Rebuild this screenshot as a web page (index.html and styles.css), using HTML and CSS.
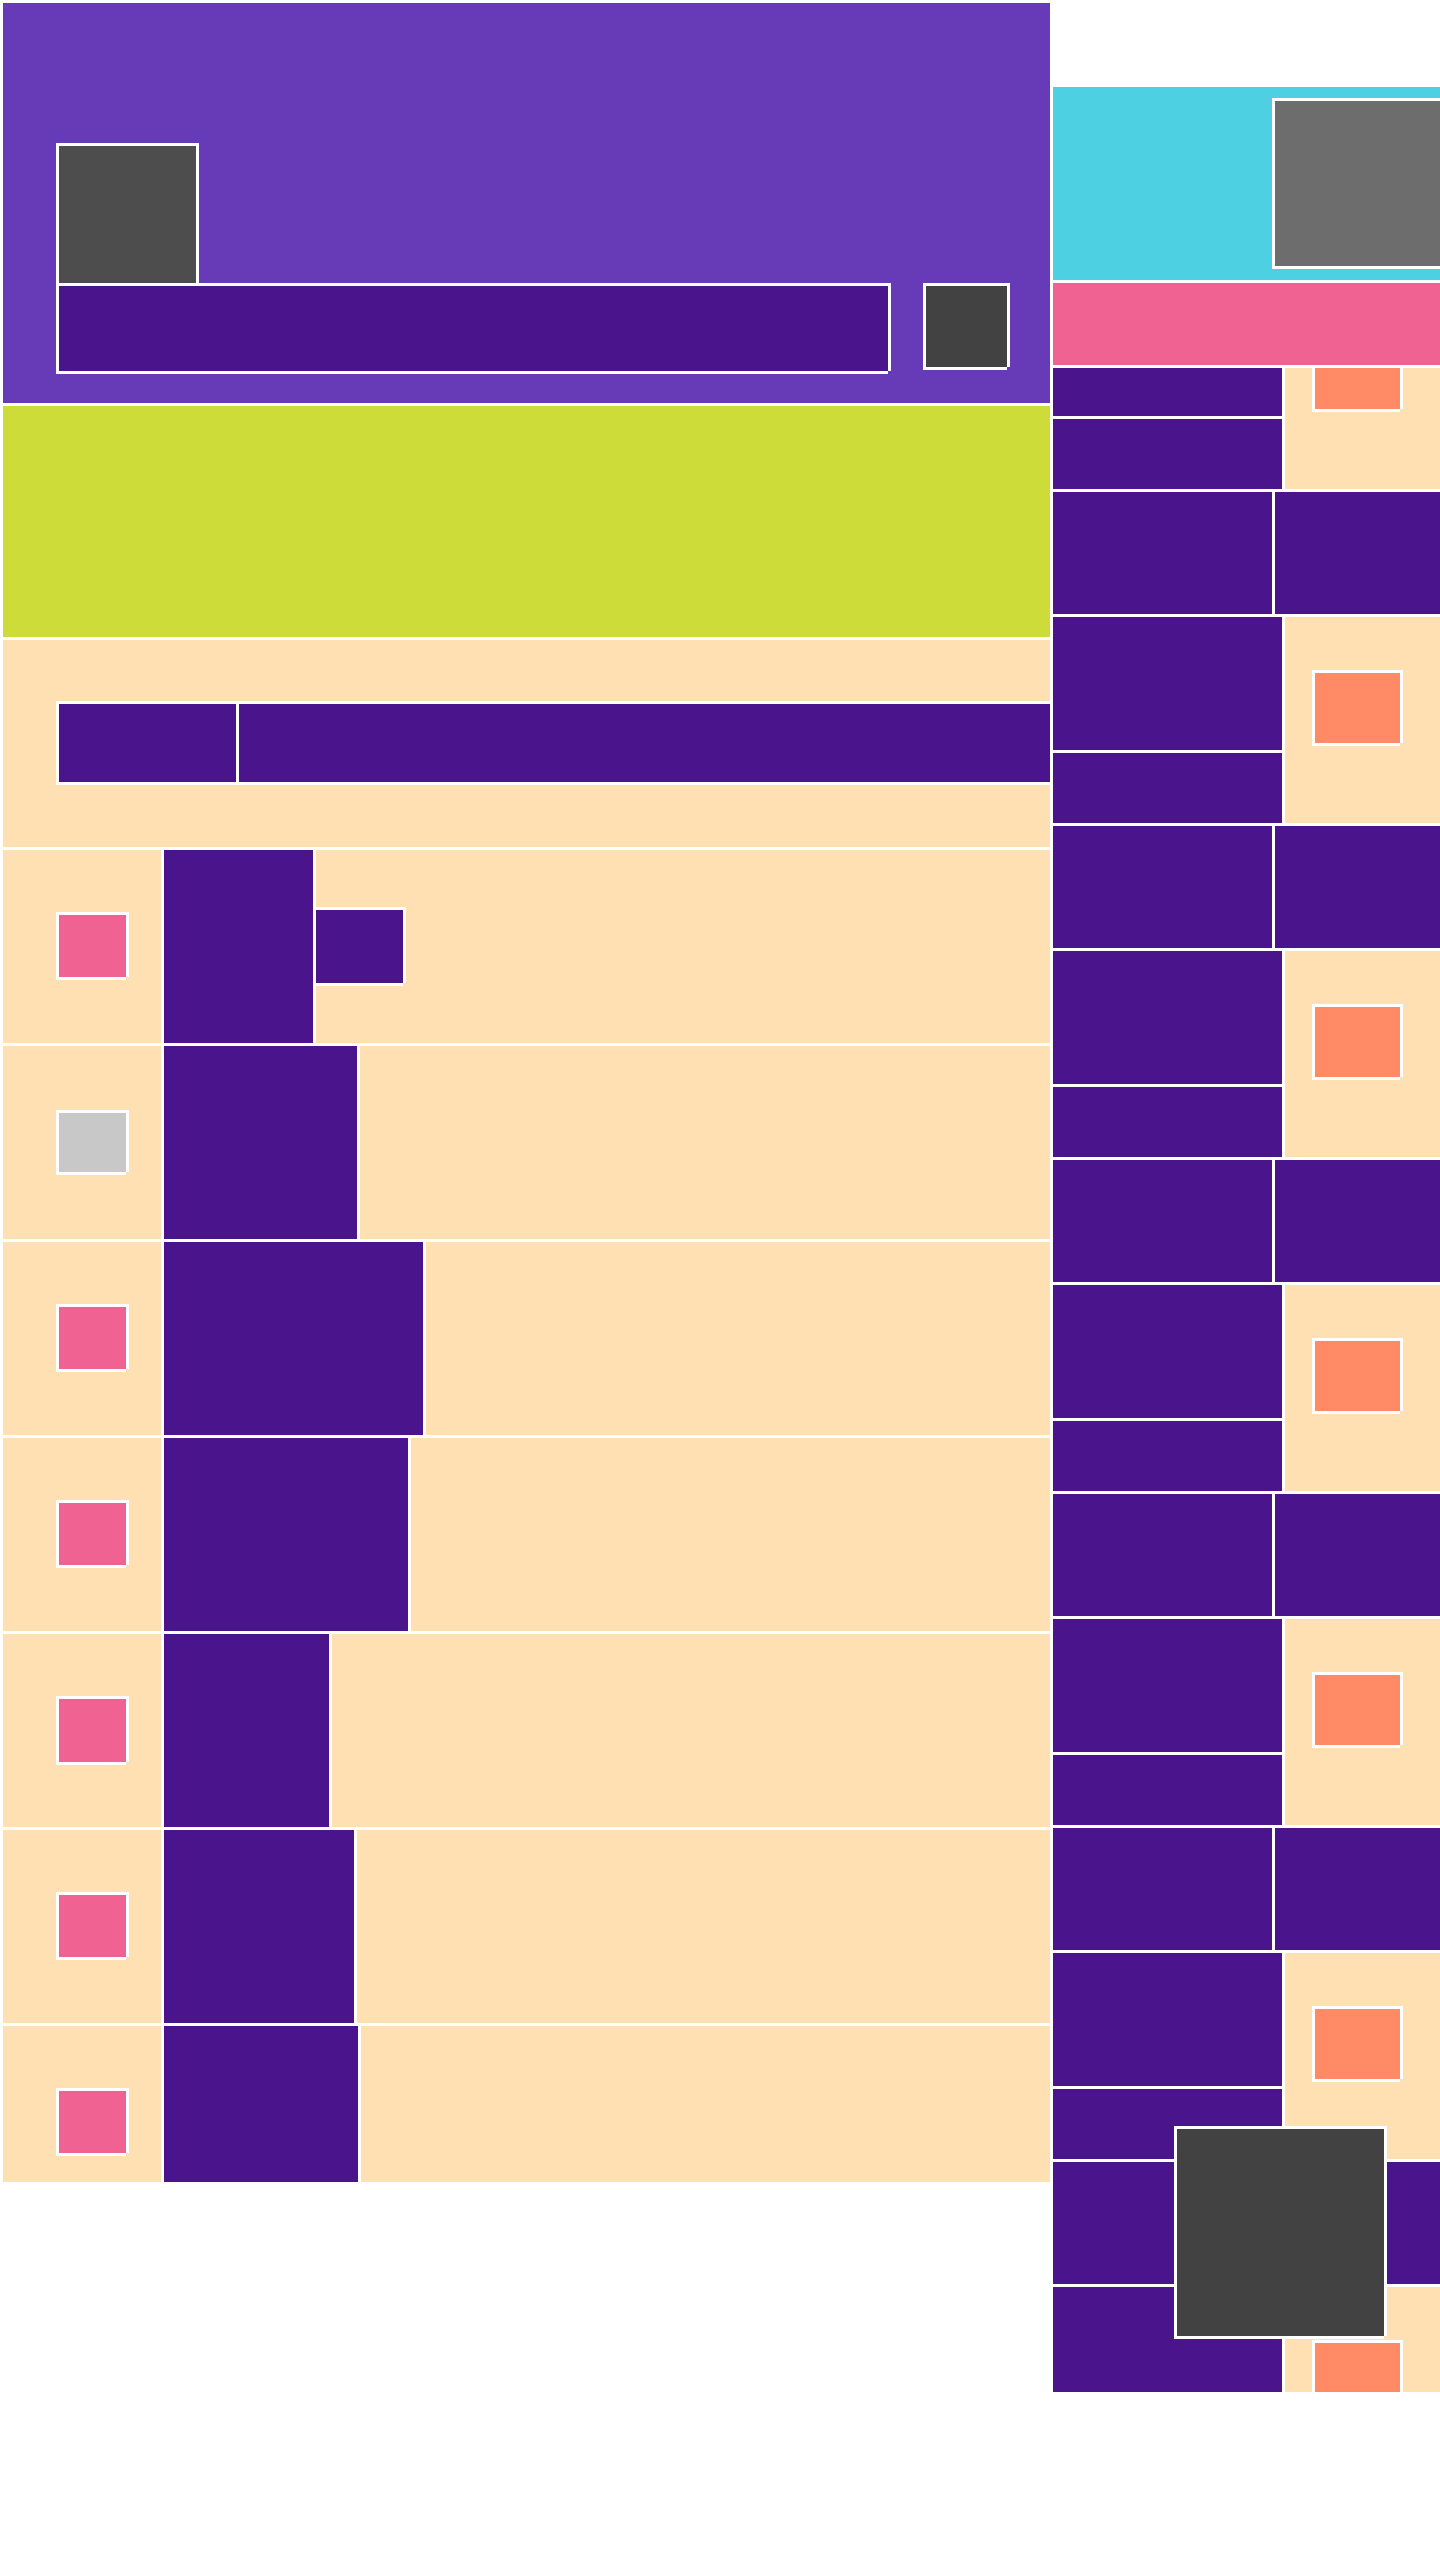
FILE: index.html
```html
<!DOCTYPE html>
<html>
<head>
  <meta charset="utf-8">
  <meta name="viewport" content="width=device-width, initial-scale=1">
  <title>Wireframe</title>
  <link rel="stylesheet" href="styles.css">
</head>
<body>
  <div class="page">
    <main class="main">
      <header class="hero">
        <div class="avatar edge"></div>
        <div class="hero-row">
          <div class="hero-bar edge"></div>
          <div class="hero-btn edge"></div>
        </div>
      </header>

      <div class="banner"></div>

      <div class="tabs">
        <div class="tab tab-first edge"></div>
        <div class="tab tab-rest edge"></div>
      </div>

      <div class="row">
        <div class="row-icon"><div class="chip edge"></div></div>
        <div class="row-label" style="width: 149px"></div>
        <div class="row-fill"><div class="tag edge"></div></div>
      </div>
      <div class="row">
        <div class="row-icon"><div class="chip chip-off edge"></div></div>
        <div class="row-label" style="width: 193px"></div>
        <div class="row-fill"></div>
      </div>
      <div class="row">
        <div class="row-icon"><div class="chip edge"></div></div>
        <div class="row-label" style="width: 259px"></div>
        <div class="row-fill"></div>
      </div>
      <div class="row">
        <div class="row-icon"><div class="chip edge"></div></div>
        <div class="row-label" style="width: 244px"></div>
        <div class="row-fill"></div>
      </div>
      <div class="row">
        <div class="row-icon"><div class="chip chip-tall edge"></div></div>
        <div class="row-label" style="width: 165px"></div>
        <div class="row-fill"></div>
      </div>
      <div class="row">
        <div class="row-icon"><div class="chip edge"></div></div>
        <div class="row-label" style="width: 190px"></div>
        <div class="row-fill"></div>
      </div>
      <div class="row row-last">
        <div class="row-icon"><div class="chip edge"></div></div>
        <div class="row-label" style="width: 194px"></div>
        <div class="row-fill"></div>
      </div>
    </main>

    <aside class="side">
      <div class="side-top">
        <div class="side-photo edge"></div>
      </div>
      <div class="side-head"></div>

      <div class="feed">
        <div class="card">
          <div class="card-text"><div class="card-title"></div><div class="card-sub"></div></div>
          <div class="card-media"><div class="thumb edge"></div></div>
        </div>
        <div class="pair"><div class="pair-a"></div><div class="pair-b"></div></div>

        <div class="card">
          <div class="card-text"><div class="card-title"></div><div class="card-sub"></div></div>
          <div class="card-media"><div class="thumb edge"></div></div>
        </div>
        <div class="pair"><div class="pair-a"></div><div class="pair-b"></div></div>

        <div class="card">
          <div class="card-text"><div class="card-title"></div><div class="card-sub"></div></div>
          <div class="card-media"><div class="thumb edge"></div></div>
        </div>
        <div class="pair"><div class="pair-a"></div><div class="pair-b"></div></div>

        <div class="card">
          <div class="card-text"><div class="card-title"></div><div class="card-sub"></div></div>
          <div class="card-media"><div class="thumb edge"></div></div>
        </div>
        <div class="pair"><div class="pair-a"></div><div class="pair-b"></div></div>

        <div class="card">
          <div class="card-text"><div class="card-title"></div><div class="card-sub"></div></div>
          <div class="card-media"><div class="thumb edge"></div></div>
        </div>
        <div class="pair"><div class="pair-a"></div><div class="pair-b"></div></div>

        <div class="card">
          <div class="card-text"><div class="card-title"></div><div class="card-sub"></div></div>
          <div class="card-media"><div class="thumb edge"></div></div>
        </div>
        <div class="pair"><div class="pair-a"></div><div class="pair-b"></div></div>

        <div class="card">
          <div class="card-text"><div class="card-title"></div><div class="card-sub"></div></div>
          <div class="card-media"><div class="thumb edge"></div></div>
        </div>
      </div>
    </aside>

    <div class="fab edge"></div>
  </div>
</body>
</html>
```

FILE: styles.css
```css
html, body {
  margin: 0;
  background: #fff;
}

.page {
  position: relative;
  display: flex;
  gap: 3px;
  box-sizing: border-box;
  width: 1440px;
  height: 2560px;
  padding: 3px 0 0 3px;
  overflow: hidden;
}

/* white outline, open at the bottom right corner */
.edge {
  box-shadow: -3px -3px 0 #fff, 3px -3px 0 #fff, -3px 3px 0 #fff, 3px 0 0 #fff, 0 3px 0 #fff;
}

/* left column */
.main {
  display: flex;
  flex-direction: column;
  gap: 3px;
  flex: none;
  width: 1047px;
  height: 2179px;
}

.hero {
  flex: none;
  box-sizing: border-box;
  height: 400px;
  padding: 143px 0 0 56px;
  background: #673ab7;
}

.avatar {
  width: 137px;
  height: 137px;
  background: #4d4d4d;
}

.hero-row {
  display: flex;
  gap: 38px;
  margin-top: 3px;
}

.hero-bar {
  width: 829px;
  height: 85px;
  background: #4a148c;
}

.hero-btn {
  width: 81px;
  height: 81px;
  background: #424242;
}

.banner {
  flex: none;
  height: 231px;
  background: #cddc39;
}

.tabs {
  display: flex;
  gap: 3px;
  flex: none;
  box-sizing: border-box;
  height: 207px;
  padding: 64px 0 0 56px;
  background: #ffe0b2;
  overflow: hidden;
}

.tab {
  height: 78px;
  background: #4a148c;
}

.tab-first {
  flex: none;
  width: 177px;
}

.tab-rest {
  flex: 1;
}

.row {
  display: flex;
  gap: 3px;
  flex: none;
  height: 193px;
}

.row-last {
  height: 156px;
}

.row-icon {
  flex: none;
  box-sizing: border-box;
  width: 158px;
  padding: 65px 0 0 56px;
  background: #ffe0b2;
}

.chip {
  width: 67px;
  height: 62px;
  background: #f06292;
}

.chip-tall {
  height: 63px;
}

.chip-off {
  height: 59px;
  margin-top: 2px;
  background: #c8c8c8;
}

.row-label {
  flex: none;
  background: #4a148c;
}

.row-fill {
  flex: 1;
  display: flex;
  align-items: center;
  background: #ffe0b2;
}

.tag {
  width: 87px;
  height: 73px;
  background: #4a148c;
}

/* right column, runs off the edge of the window */
.side {
  display: flex;
  flex-direction: column;
  gap: 3px;
  flex: none;
  box-sizing: border-box;
  width: 387px;
  height: 2389px;
  padding-top: 84px;
  overflow: hidden;
}

.side-top {
  display: flex;
  align-items: center;
  flex: none;
  box-sizing: border-box;
  height: 193px;
  padding-left: 222px;
  background: #4dd0e1;
}

.side-photo {
  flex: 1;
  height: 165px;
  background: #6d6d6d;
}

.side-head {
  position: relative;
  z-index: 1;
  flex: none;
  height: 82px;
  background: #f06292;
  box-shadow: 0 3px 0 #fff;
}

/* first card sits partly under the pink header */
.feed {
  display: flex;
  flex-direction: column;
  gap: 3px;
  flex: none;
  margin-top: -85px;
}

.card {
  display: flex;
  gap: 3px;
  flex: none;
  height: 206px;
}

.card-text {
  display: flex;
  flex-direction: column;
  gap: 3px;
  flex: none;
  width: 229px;
}

.card-title {
  height: 133px;
  background: #4a148c;
}

.card-sub {
  height: 70px;
  background: #4a148c;
}

.card-media {
  flex: 1;
  box-sizing: border-box;
  padding: 56px 0 0 30px;
  background: #ffe0b2;
}

.thumb {
  width: 85px;
  height: 70px;
  background: #ff8a65;
}

.pair {
  display: flex;
  gap: 3px;
  flex: none;
  height: 122px;
}

.pair-a {
  flex: none;
  width: 219px;
  background: #4a148c;
}

.pair-b {
  flex: 1;
  background: #4a148c;
}

.fab {
  position: absolute;
  right: 56px;
  bottom: 224px;
  width: 207px;
  height: 207px;
  background: #424242;
}
```
